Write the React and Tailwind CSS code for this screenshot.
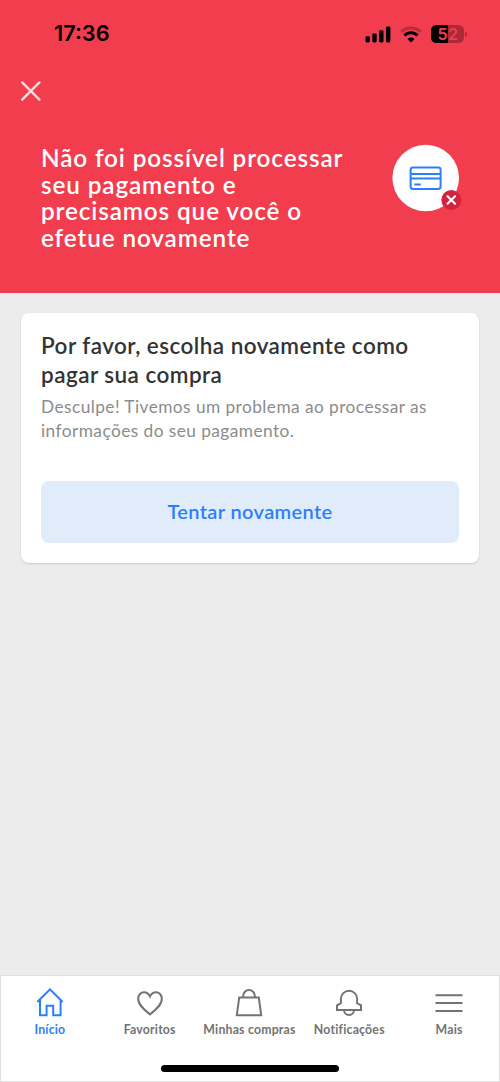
import React from 'react';
import clsx from 'clsx';

const StatusBar = () => (
  <div className="flex items-center justify-between h-[68px] pl-[54px] pr-[33px]">
    <span className="pb-px font-['Inter'] text-[21.7px] leading-none font-semibold text-black">17:36</span>

    <div className="flex items-center gap-[9px]">
      <svg width="26" height="17" viewBox="0 0 26 17" fill="#000">
        <rect x="0.5" y="10.3" width="4.4" height="6.1" rx="1.3" />
        <rect x="7.3" y="7.5" width="4.4" height="8.9" rx="1.3" />
        <rect x="14.1" y="4.2" width="4.4" height="12.2" rx="1.3" />
        <rect x="21" y="0.4" width="4.4" height="16" rx="1.3" />
      </svg>
      <svg width="22" height="17" viewBox="0 0 22 17" fill="none" strokeWidth="3">
        <path d="M1.3 5.9a13.8 13.8 0 0 1 19.4 0" stroke="#b52e3c" />
        <path d="M4.5 9.5a9.2 9.2 0 0 1 13 0" stroke="#000" />
        <path d="M11 16.4 7.5 12.9a5 5 0 0 1 7 0z" fill="#000" />
      </svg>
      <div className="flex items-center gap-px">
        <div className="flex h-[18px] w-[33px] overflow-hidden rounded-[5.5px] bg-[#a92b38] font-['Inter'] text-[16px] leading-[18px] font-semibold text-[#f23d4f]">
          <span className="w-[17px] bg-black pr-[0.5px] text-right">5</span>
          <span>2</span>
        </div>
        <span className="h-[5px] w-[2px] rounded-r-full bg-[#a92b38]" />
      </div>
    </div>
  </div>
);

const PaymentIcon = () => (
  <svg width="71" height="69" viewBox="0 0 71 69" fill="none">
    <circle cx="33.7" cy="34" r="33.3" fill="#fff" />
    <g stroke="#2d7ff9" strokeWidth="2">
      <rect x="18.6" y="23.5" width="30" height="21.4" rx="2.4" />
      <path d="M19 29.9h29.5M19 34.4h29.5M22.3 40.5h6.5" />
    </g>
    <circle cx="59.3" cy="56" r="10" fill="#d12440" />
    <path d="m55.5 52.2 7.6 7.6m0-7.6-7.6 7.6" stroke="#fff" strokeWidth="2.1" strokeLinecap="round" />
  </svg>
);

const navItems = [
  {
    label: 'Início',
    active: true,
    icon: <path d="M2.3 15 15 2.3 27.7 15M5 13v15.2h6.6v-9.4h6.6v9.4h7.4V13" />,
  },
  {
    label: 'Favoritos',
    icon: <path d="M15 27.4C9 22.8 3.2 18 3.2 11.8 3.2 7.7 6 5.3 9 5.3c2.8 0 4.8 1.6 6 4.1 1.2-2.5 3.2-4.1 6-4.1 3 0 5.8 2.4 5.8 6.5 0 6.2-5.8 11-11.8 15.6z" />,
  },
  {
    label: 'Minhas compras',
    icon: <path d="M5.2 10.5h19.6l2.4 17.7H2.8zM9.2 10.5V8.8a5.8 5.8 0 0 1 11.6 0v1.7" />,
  },
  {
    label: 'Notificações',
    icon: <path d="M3 22.9v-4.5l3.9-2.3v-4.4a8.1 7.9 0 0 1 16.2 0v4.4l3.9 2.3v4.5zM10 22.9a5 5 0 0 0 10 0" />,
  },
  {
    label: 'Mais',
    icon: <path d="M1.5 8.3h27M1.5 16.1h27M1.5 24h27" />,
  },
];

const BottomNav = () => (
  <nav className="flex h-[107px] flex-col border border-[#e0e0e0] bg-white">
    <div className="-ml-px grid grid-cols-5 pt-[11px]">
      {navItems.map(({ label, active, icon }) => (
        <button
          key={label}
          className={clsx(
            'flex flex-col items-center gap-px whitespace-nowrap text-[12.3px] leading-[20px] font-bold tracking-[0.2px]',
            active ? 'text-[#2d7ff9]' : 'text-[#737373]'
          )}
        >
          <svg className="h-[32px] w-[30px]" viewBox="0 0 30 32" fill="none" stroke="currentColor" strokeWidth="2">
            {icon}
          </svg>
          {label}
        </button>
      ))}
    </div>
    <div className="mx-auto mt-auto mb-[9px] h-[7px] w-[178px] rounded-full bg-black" />
  </nav>
);

const App = () => (
  <div className="flex h-[1082px] w-[500px] flex-col bg-[#ececec] font-['Lato',sans-serif]">
    <header className="h-[293px] bg-[#f23d4f]">
      <StatusBar />
      <button className="mt-[13px] ml-[21px] block">
        <svg width="20" height="20" viewBox="0 0 20 20" stroke="#ffdce0" strokeWidth="2.4" strokeLinecap="round">
          <path d="m1.2 1.4 17.2 17.2m0-17.2L1.2 18.6" />
        </svg>
      </button>
      <div className="mt-[43px] flex justify-between pr-[37px] pl-[41px]">
        <h1 className="pt-[0.8px] whitespace-nowrap text-[24.3px] leading-[26.7px] font-semibold tracking-[0.88px] text-white">
          Não foi possível processar<br />
          seu pagamento e<br />
          precisamos que você o<br />
          efetue novamente
        </h1>
        <PaymentIcon />
      </div>
    </header>

    <main className="flex-1 px-[21px] pt-[20px]">
      <section className="h-[250px] rounded-[8px] bg-white px-[20px] pt-[18px] shadow-[0_1px_2px_rgba(0,0,0,0.15)]">
        <h2 className="whitespace-nowrap text-[22.5px] leading-[29.3px] font-semibold tracking-[0.45px] text-[#333]">
          Por favor, escolha novamente como<br />
          pagar sua compra
        </h2>
        <p className="mt-[5.4px] whitespace-nowrap text-[17.3px] leading-[24px] tracking-[0.44px] text-[#8c8c8c]">
          Desculpe! Tivemos um problema ao processar as<br />
          informações do seu pagamento.
        </p>
        <button className="mt-[38px] h-[62px] w-full rounded-[8px] bg-[#e1ecfa] pb-[2px] text-[20px] font-semibold tracking-[0.37px] text-[#2d7ff9]">
          Tentar novamente
        </button>
      </section>
    </main>

    <BottomNav />
  </div>
);

export default App;
